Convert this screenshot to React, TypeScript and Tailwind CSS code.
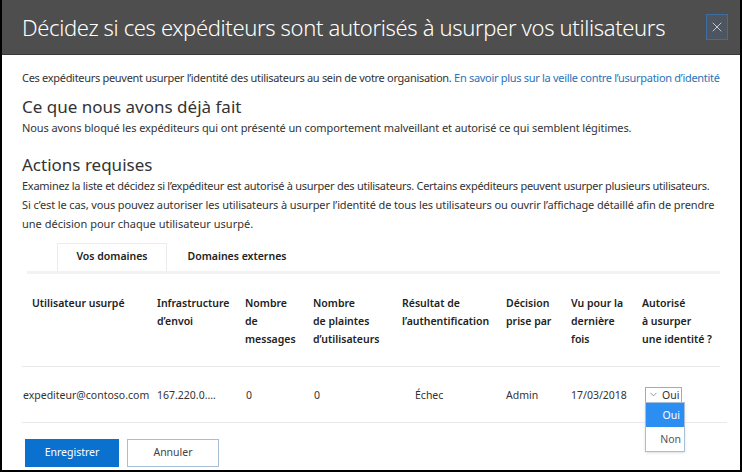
import { X, ChevronDown } from "lucide-react";

const cols = "grid grid-cols-[135px_88px_68px_89px_104px_65px_71px_1fr]";

export default function App() {
    return (
        <div className="w-[742px] h-[472px] overflow-hidden bg-white border-x-2 border-b-2 border-black font-['Noto_Sans',sans-serif] text-[#333333] flex flex-col">

            {/* Header */}
            <div className="h-[55px] shrink-0 bg-[#4e4e4e] flex items-center justify-between pl-[20px] pr-[12px] border-b border-[#3a3a3a]">
                <h1 className="text-white text-[22px] font-light tracking-[-0.35px]">
                    Décidez si ces expéditeurs sont autorisés à usurper vos utilisateurs
                </h1>
                <button className="w-[22px] h-[26px] flex items-center justify-center border border-[#3c6fa0] bg-[#4c5560] text-[#e6e6e6]">
                    <X size={16} strokeWidth={1.2} />
                </button>
            </div>

            {/* Body */}
            <div className="px-[20px] pt-[13px] text-[11px] leading-[19px] whitespace-nowrap">
                <p className="tracking-[-0.3px]">
                    Ces expéditeurs peuvent usurper l’identité des utilisateurs au sein de votre organisation.{" "}
                    <a className="text-[#2c72b8]">En savoir plus sur la veille contre l’usurpation d’identité</a>
                </p>

                <h2 className="text-[17px] leading-[22px] mt-[9px]">Ce que nous avons déjà fait</h2>
                <p className="tracking-[-0.1px]">Nous avons bloqué les expéditeurs qui ont présenté un comportement malveillant et autorisé ce qui semblent légitimes.</p>

                <h2 className="text-[17px] leading-[22px] mt-[17px]">Actions requises</h2>
                <p className="tracking-[-0.27px]">
                    Examinez la liste et décidez si l’expéditeur est autorisé à usurper des utilisateurs. Certains expéditeurs peuvent usurper plusieurs utilisateurs.
                </p>
                <p className="tracking-[-0.12px]">
                    Si c’est le cas, vous pouvez autoriser les utilisateurs à usurper l’identité de tous les utilisateurs ou ouvrir l’affichage détaillé afin de prendre
                </p>
                <p>une décision pour chaque utilisateur usurpé.</p>
            </div>

            {/* Tabs */}
            <div className="mx-[25px] mt-[10px] w-[693px] flex border-b-[3px] border-[#f2f2f2] font-semibold text-[10.5px] text-[#222]">
                <div className="ml-[30px] w-[110px] h-[28px] flex items-center justify-center border border-b-0 border-[#ececec] bg-white -mb-[3px] pb-[1px]">
                    Vos domaines
                </div>
                <div className="ml-[12px] w-[116px] h-[28px] flex items-center justify-center">
                    Domaines externes
                </div>
            </div>

            {/* Table */}
            <div className="mx-[20px] mt-[20px] text-[10.5px] leading-[18px]">
                <div className={`${cols} font-semibold text-[#222] pb-[18px] border-b border-[#eaeaea]`}>
                    <div className="pl-[10px]">Utilisateur usurpé</div>
                    <div>Infrastructure<br />d’envoi</div>
                    <div>Nombre<br />de<br />messages</div>
                    <div>Nombre<br />de plaintes<br />d’utilisateurs</div>
                    <div>Résultat de<br />l’authentification</div>
                    <div>Décision<br />prise par</div>
                    <div>Vu pour la<br />dernière<br />fois</div>
                    <div>Autorisé<br />à usurper<br />une identité ?</div>
                </div>

                <div className={`${cols} items-center h-[56px] border-b border-[#eaeaea] w-[705px]`}>
                    <div className="pl-[1px]">expediteur@contoso.com</div>
                    <div>167.220.0....</div>
                    <div className="pl-[1px]">0</div>
                    <div className="pl-[1px]">0</div>
                    <div className="pl-[13px]">Échec</div>
                    <div>Admin</div>
                    <div>17/03/2018</div>
                    <div className="relative pl-[3px]">
                        <div className="w-[37px] h-[16px] border border-[#8fb0d6] flex items-center gap-[3px] pl-[2px] bg-white">
                            <ChevronDown size={11} strokeWidth={1.5} className="text-[#666]" />
                            <span>Oui</span>
                        </div>
                        <div className="absolute z-10 left-[3px] top-[15px] w-[40px] border border-[#a9bfd8] bg-white shadow-sm">
                            <div className="h-[24px] bg-[#2b8ef0] text-white flex items-center justify-end pr-[4px]">Oui</div>
                            <div className="h-[24px] flex items-center justify-end pr-[3px] text-[#555]">Non</div>
                        </div>
                    </div>
                </div>
            </div>

            {/* Footer buttons */}
            <div className="flex gap-[8px] px-[23px] mt-[16px] text-[10.5px]">
                <button className="w-[94px] h-[28px] bg-[#0b71cf] text-white">Enregistrer</button>
                <button className="w-[92px] h-[28px] border border-[#a7bfd6] text-[#444] bg-white">Annuler</button>
            </div>
        </div>
    );
}
